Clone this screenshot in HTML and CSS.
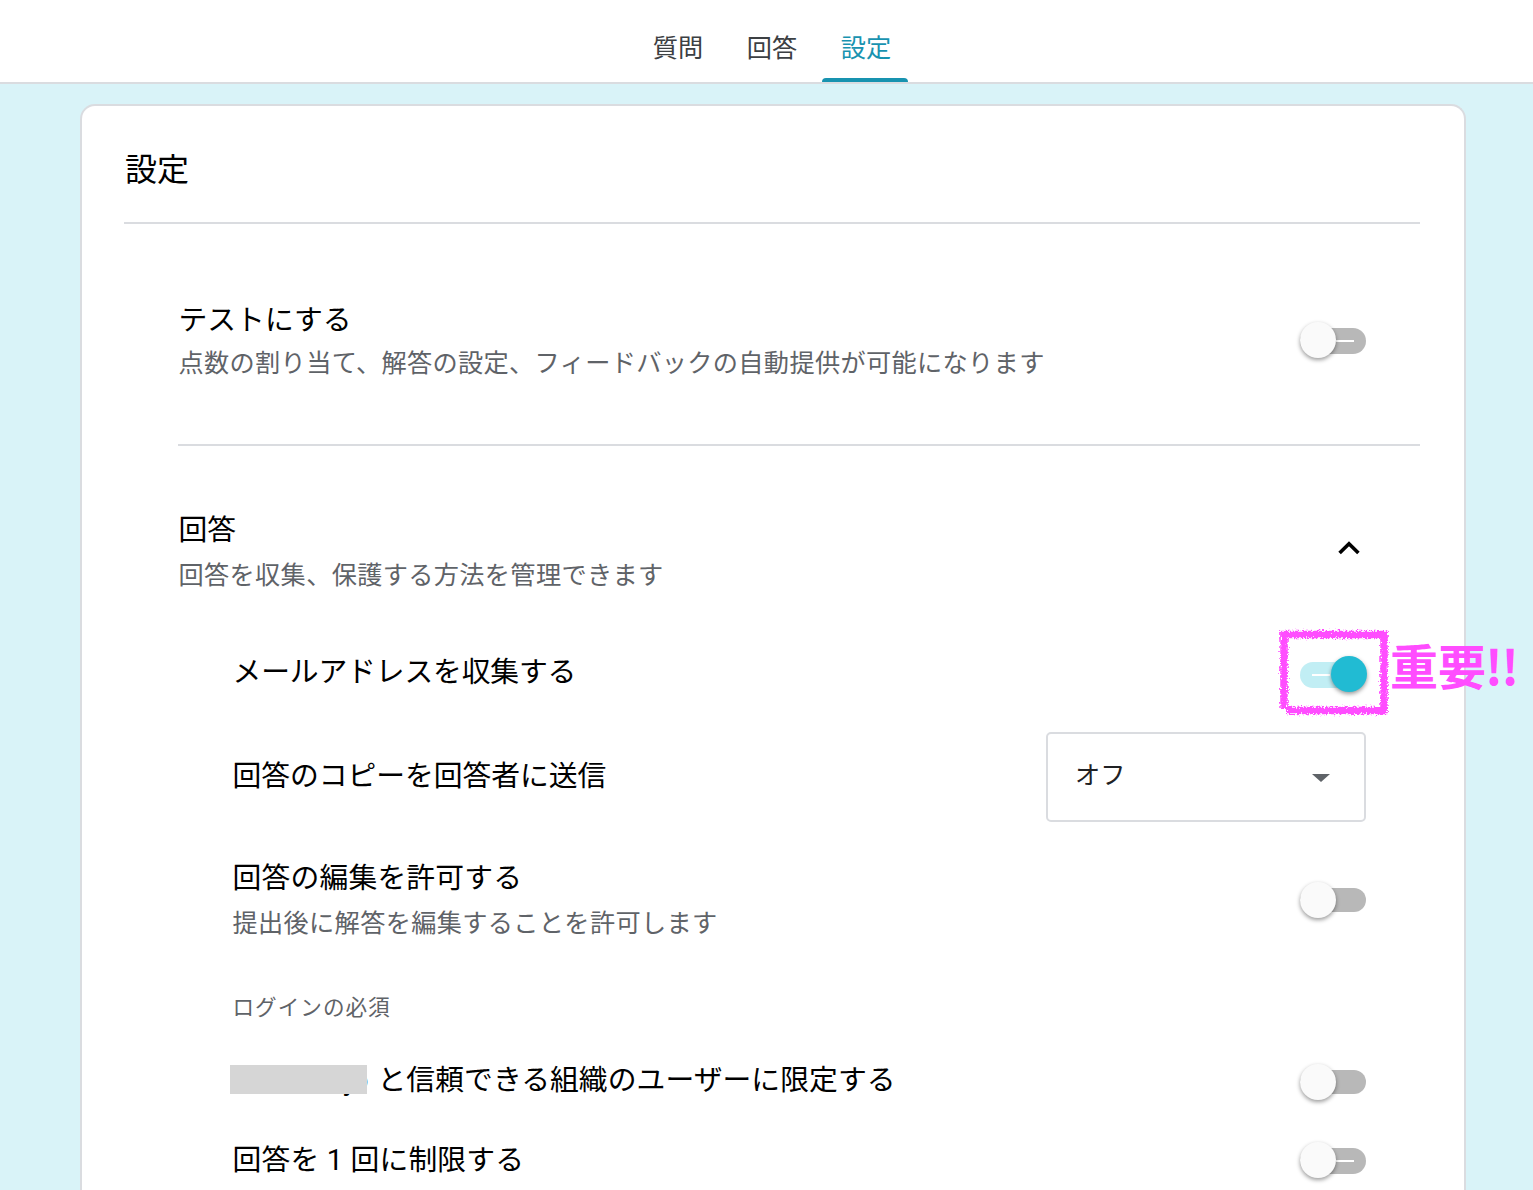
FILE: index.html
```html
<!DOCTYPE html>
<html lang="ja">
<head>
    <meta charset="UTF-8">
    <meta name="viewport" content="width=device-width, initial-scale=1.0">
    <title>設定</title>
    <link rel="stylesheet" href="styles.css">
</head>
<body>
    <nav class="tabs">
        <div class="tab">質問</div>
        <div class="tab">回答</div>
        <div class="tab active">設定</div>
    </nav>

    <main class="card">
        <h1 class="card-title">設定</h1>

        <div class="section section-quiz">
            <div class="text">
                <div class="title">テストにする</div>
                <div class="desc">点数の割り当て、解答の設定、フィードバックの自動提供が可能になります</div>
            </div>
            <div class="toggle marked"><span class="thumb"></span></div>
        </div>

        <div class="section section-answers">
            <div class="text">
                <div class="title">回答</div>
                <div class="desc">回答を収集、保護する方法を管理できます</div>
            </div>
            <svg class="chevron" width="24" height="16" viewBox="0 0 24 16">
                <path d="M2.6 13.1 L12 3.7 L21.4 13.1" fill="none" stroke="#000" stroke-width="3.6"/>
            </svg>
        </div>

        <div class="options">
            <div class="row row-email">
                <div class="title">メールアドレスを収集する</div>
                <div class="toggle marked on"><span class="thumb"></span>
                    <div class="note">
                        <svg width="114" height="92" viewBox="0 0 114 92">
                            <filter id="crayon" x="-10%" y="-10%" width="120%" height="120%">
                                <feTurbulence type="fractalNoise" baseFrequency="0.6" numOctaves="2" seed="4" result="noise"/>
                                <feDisplacementMap in="SourceGraphic" in2="noise" scale="7" xChannelSelector="R" yChannelSelector="G"/>
                            </filter>
                            <g filter="url(#crayon)" fill="none" stroke="#ff4dff" stroke-width="7.5">
                                <path d="M4.5 8.5 H111.5"/>
                                <path d="M108 5 V88"/>
                                <path d="M111.5 84.5 H11"/>
                                <path d="M8 5 V83"/>
                            </g>
                        </svg>
                        <span class="note-text">重要<span class="bangs">!!</span></span>
                    </div>
                </div>
            </div>

            <div class="row row-copy">
                <div class="title">回答のコピーを回答者に送信</div>
                <div class="select">
                    <span>オフ</span>
                    <svg width="18" height="9" viewBox="0 0 18 9"><path d="M0 1 H18 L9 9 Z" fill="#5f6368"/></svg>
                </div>
            </div>

            <div class="row row-edit">
                <div class="text">
                    <div class="title">回答の編集を許可する</div>
                    <div class="desc">提出後に解答を編集することを許可します</div>
                </div>
                <div class="toggle"><span class="thumb"></span></div>
            </div>

            <div class="label">ログインの必須</div>

            <div class="row row-org">
                <div class="title"><span class="domain">jo</span>と信頼できる組織のユーザーに限定する</div>
                <div class="toggle"><span class="thumb"></span></div>
            </div>

            <div class="row row-once">
                <div class="title">回答を 1 回に制限する</div>
                <div class="toggle marked"><span class="thumb"></span></div>
            </div>
        </div>
    </main>
</body>
</html>
```
FILE: styles.css
```css
* {
    box-sizing: border-box;
}
body {
    margin: 0;
    height: 1190px;
    overflow: hidden;
    background: #d9f3f8;
    color: #000;
    font-family: Roboto, "Noto Sans CJK JP", sans-serif;
}
.tabs {
    display: flex;
    justify-content: center;
    gap: 8px;
    height: 84px;
    padding-left: 9px;
    background: #fff;
    border-bottom: 2px solid #dadce0;
}
.tab {
    display: flex;
    flex-direction: column;
    justify-content: space-between;
    width: 86px;
    height: 82px;
    padding-top: 16px;
    text-align: center;
    text-indent: 2px;
    font-size: 25.2px;
    line-height: 66px;
    color: #3c4043;
}
.tab.active {
    color: #1893b0;
}
.tab.active::after {
    content: "";
    height: 4px;
    margin-top: -4px;
    background: #1893b0;
    border-radius: 4px 4px 0 0;
}
.card {
    width: 1386px;
    height: 1086px;
    margin: 20px 0 0 80px;
    padding: 0 44px 0 42px;
    background: #fff;
    border: 2px solid #dadce0;
    border-bottom: none;
    border-radius: 15px 15px 0 0;
}
.card-title {
    margin: 0;
    height: 118px;
    padding-left: 1px;
    border-bottom: 2px solid #dadce0;
    font-size: 32px;
    font-weight: 400;
    line-height: 129px;
}
.section {
    display: flex;
    justify-content: space-between;
    align-items: center;
    margin-left: 54px;
    padding-right: 54px;
}
.section-quiz {
    height: 222px;
    padding-top: 14px;
    border-bottom: 2px solid #dadce0;
}
.section-quiz .text {
    padding-top: 2px;
}
.section-quiz .title,
.section-quiz .desc {
    line-height: 44px;
}
.section-answers {
    height: 152px;
    padding-top: 61px;
}
.title {
    padding-left: 0.5px;
    font-size: 28.8px;
    line-height: 46px;
    white-space: nowrap;
}
.desc {
    padding-left: 0.5px;
    font-size: 25.2px;
    line-height: 46px;
    letter-spacing: 0.34px;
    color: #5f6368;
    white-space: nowrap;
}
.chevron {
    margin: 0 5px 10px 0;
}
.options {
    margin-left: 108px;
    padding: 22px 54px 0 0;
}
.row {
    display: flex;
    justify-content: space-between;
    align-items: center;
}
.row-email {
    height: 108px;
    padding-top: 1px;
}
.row-email .title {
    padding-bottom: 5px;
    letter-spacing: -0.15px;
}
.row-copy {
    height: 98px;
}
.row-copy .title {
    padding-bottom: 2px;
    letter-spacing: -0.05px;
}
.row-edit {
    margin-top: 28px;
}
.row-edit .text {
    margin: 1px 0 -1px;
}
.row-edit .title,
.row-once .title {
    letter-spacing: 0.18px;
}
.label {
    margin: 40px 0 12px;
    padding-left: 0.5px;
    font-size: 21.6px;
    line-height: 44px;
    letter-spacing: 1px;
    color: #5f6368;
}
.row-org {
    height: 80px;
}
.row-org .title {
    padding-bottom: 4px;
    letter-spacing: 0.05px;
}
.row-once {
    height: 68px;
    padding-top: 10px;
}
.row-once .title {
    padding-bottom: 2px;
}

/* switches */
.toggle {
    position: relative;
    flex: none;
    width: 66px;
    height: 24px;
    border-radius: 13px;
    background: #b8b8b8;
}
.toggle.marked {
    height: 26px;
    background: linear-gradient(#fff, #fff) 36px 12px / 18px 2px no-repeat #b8b8b8;
}
.toggle.on {
    background: linear-gradient(#fff, #fff) 12px 12px / 18px 2px no-repeat #c1eef4;
}
.thumb {
    position: absolute;
    top: -6px;
    left: 0;
    width: 36px;
    height: 36px;
    border-radius: 50%;
    background: #fafafa;
    box-shadow: 0 2px 4px rgba(0, 0, 0, 0.4);
}
.on .thumb {
    left: 31px;
    background: #21bbd3;
}

.select {
    display: flex;
    justify-content: space-between;
    align-items: center;
    width: 320px;
    height: 90px;
    padding: 0 34px 0 27px;
    border: 2px solid #dadce0;
    border-radius: 5px;
    font-size: 25.2px;
    color: #202124;
}
.select span {
    padding-bottom: 9px;
}

/* grey bar over the domain name */
.domain {
    position: relative;
    display: inline-block;
    width: 138px;
    margin: 0 9px 0 -2px;
    text-align: right;
}
.domain::after {
    content: "";
    position: absolute;
    top: 8px;
    left: -1px;
    width: 137px;
    height: 29px;
    background: #d6d6d6;
}

/* handwritten highlight */
.note {
    position: absolute;
    top: -36px;
    left: -24px;
    display: flex;
    width: 250px;
}
.note-text {
    color: #ff4dff;
    font-family: "Noto Sans CJK JP", sans-serif;
    font-size: 48px;
    font-weight: 700;
    line-height: 76px;
    white-space: nowrap;
}
.bangs {
    margin-left: -1px;
    letter-spacing: -1.5px;
}
```
